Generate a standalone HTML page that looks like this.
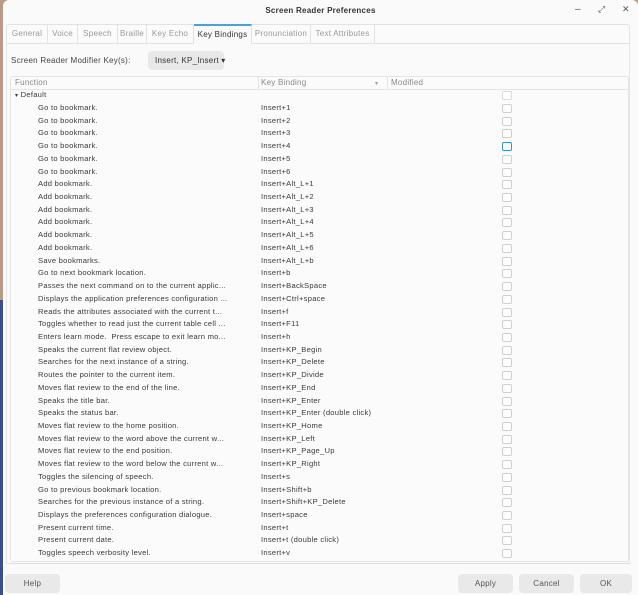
<!DOCTYPE html>
<html><head><meta charset="utf-8"><style>
*{margin:0;padding:0;box-sizing:border-box}
body{width:638px;height:595px;overflow:hidden;background:#b89a86;font-family:"Liberation Sans",sans-serif;position:relative;letter-spacing:0.25px}
#edge{position:absolute;left:0;top:300px;width:4px;height:295px;background:#3d4f86}
#win{position:absolute;left:3px;top:0;width:635px;height:595px;background:#fafafa;border-radius:6px 6px 0 0}
.t{position:absolute;font-size:8px;color:#444;white-space:nowrap}
.tab{position:absolute;top:24px;height:20px;font-size:8px;color:#999;line-height:19px;text-align:center;border-right:1px solid #e2e2e2}
.row{position:absolute;left:0;width:638px;height:12.7px;font-size:7.6px;color:#3a3a3a;line-height:12.7px}
.row .f{position:absolute;left:38px}
.row .k{position:absolute;left:261px}
.cb{position:absolute;left:502px;top:2px;width:10px;height:9px;border:1px solid #cfcfcf;border-radius:2px;background:#fff}
.btn{position:absolute;top:574px;height:19px;background:#e9e9e9;border-radius:4px;font-size:8px;color:#555;text-align:center;line-height:19px}
</style></head><body>
<div id="edge"></div>
<div id="win">
<div class="t" style="left:0;width:635px;text-align:center;top:6px;font-weight:bold;color:#333">Screen Reader Preferences</div>
<div class="t" style="left:572px;top:4px;font-size:10px;color:#555">–</div>
<div class="t" style="left:595px;top:4px;font-size:9px;color:#555">⤢</div>
<div class="t" style="left:619px;top:4px;font-size:9px;color:#555">✕</div>
</div>
<div style="position:absolute;left:6px;top:24px;width:624px;height:20px;border:1px solid #e2e2e2;border-radius:3px 3px 0 0;background:#fbfbfb"></div>
<div class="tab" style="left:7px;width:41px">General</div>
<div class="tab" style="left:48px;width:30px">Voice</div>
<div class="tab" style="left:78px;width:40px">Speech</div>
<div class="tab" style="left:118px;width:29px">Braille</div>
<div class="tab" style="left:147px;width:47px">Key Echo</div>
<div class="tab" style="left:194px;width:58px;color:#333;background:#fafafa;border-top:2px solid #4aa3d8;line-height:17px">Key Bindings</div>
<div class="tab" style="left:252px;width:59px">Pronunciation</div>
<div class="tab" style="left:311px;width:64px">Text Attributes</div>
<div style="position:absolute;left:6px;top:44px;width:624px;height:520px;border:1px solid #e6e6e6;border-top:none"></div>
<div class="t" style="left:11px;top:56px;color:#444">Screen Reader Modifier Key(s):</div>
<div style="position:absolute;left:148px;top:51px;width:76px;height:19px;background:#e8e8e8;border-radius:4px"></div>
<div class="t" style="left:155px;top:56px;color:#333">Insert, KP_Insert ▾</div>
<div style="position:absolute;left:10px;top:76px;width:619px;height:486px;border:1px solid #e4e4e4;border-radius:3px;background:#fbfbfb"></div>
<div style="position:absolute;left:10px;top:89px;width:619px;height:1px;background:#e4e4e4"></div>
<div style="position:absolute;left:258px;top:76px;width:1px;height:13px;background:#e4e4e4"></div>
<div style="position:absolute;left:387px;top:76px;width:1px;height:13px;background:#e4e4e4"></div>
<div class="t" style="left:15px;top:78px;color:#888">Function</div>
<div class="t" style="left:261px;top:78px;color:#888">Key Binding</div>
<div class="t" style="left:375px;color:#999;font-size:6px;top:80px">▾</div>
<div class="t" style="left:391px;top:78px;color:#888">Modified</div>
<div class="row" style="top:89px"><span class="f" style="left:15px"><span style="font-size:6px">▾</span> Default</span><div class="cb" style="border-color:#ddd"></div></div>
<div id="rows"></div>
<div style="position:absolute;left:10px;top:563px;width:620px;height:1px;background:#ddd"></div>
<div class="btn" style="left:5px;width:55px">Help</div>
<div class="btn" style="left:458px;width:55px">Apply</div>
<div class="btn" style="left:519px;width:55px">Cancel</div>
<div class="btn" style="left:580px;width:52px">OK</div>
<script>
var d=[["Go to bookmark.","Insert+1"],["Go to bookmark.","Insert+2"],["Go to bookmark.","Insert+3"],["Go to bookmark.","Insert+4"],["Go to bookmark.","Insert+5"],["Go to bookmark.","Insert+6"],["Add bookmark.","Insert+Alt_L+1"],["Add bookmark.","Insert+Alt_L+2"],["Add bookmark.","Insert+Alt_L+3"],["Add bookmark.","Insert+Alt_L+4"],["Add bookmark.","Insert+Alt_L+5"],["Add bookmark.","Insert+Alt_L+6"],["Save bookmarks.","Insert+Alt_L+b"],["Go to next bookmark location.","Insert+b"],["Passes the next command on to the current applic...","Insert+BackSpace"],["Displays the application preferences configuration ...","Insert+Ctrl+space"],["Reads the attributes associated with the current t...","Insert+f"],["Toggles whether to read just the current table cell ...","Insert+F11"],["Enters learn mode.&nbsp; Press escape to exit learn mo...","Insert+h"],["Speaks the current flat review object.","Insert+KP_Begin"],["Searches for the next instance of a string.","Insert+KP_Delete"],["Routes the pointer to the current item.","Insert+KP_Divide"],["Moves flat review to the end of the line.","Insert+KP_End"],["Speaks the title bar.","Insert+KP_Enter"],["Speaks the status bar.","Insert+KP_Enter (double click)"],["Moves flat review to the home position.","Insert+KP_Home"],["Moves flat review to the word above the current w...","Insert+KP_Left"],["Moves flat review to the end position.","Insert+KP_Page_Up"],["Moves flat review to the word below the current w...","Insert+KP_Right"],["Toggles the silencing of speech.","Insert+s"],["Go to previous bookmark location.","Insert+Shift+b"],["Searches for the previous instance of a string.","Insert+Shift+KP_Delete"],["Displays the preferences configuration dialogue.","Insert+space"],["Present current time.","Insert+t"],["Present current date.","Insert+t (double click)"],["Toggles speech verbosity level.","Insert+v"]];
var h="";d.forEach(function(r,i){var t=102+i*12.72;h+='<div class="row" style="top:'+t+'px"><span class="f">'+r[0]+'</span><span class="k">'+r[1]+'</span><div class="cb"'+(i==3?' style="border-color:#3b8fc4;border-width:1.5px"':'')+'></div></div>';});
document.getElementById("rows").innerHTML=h;
</script>
</body></html>
